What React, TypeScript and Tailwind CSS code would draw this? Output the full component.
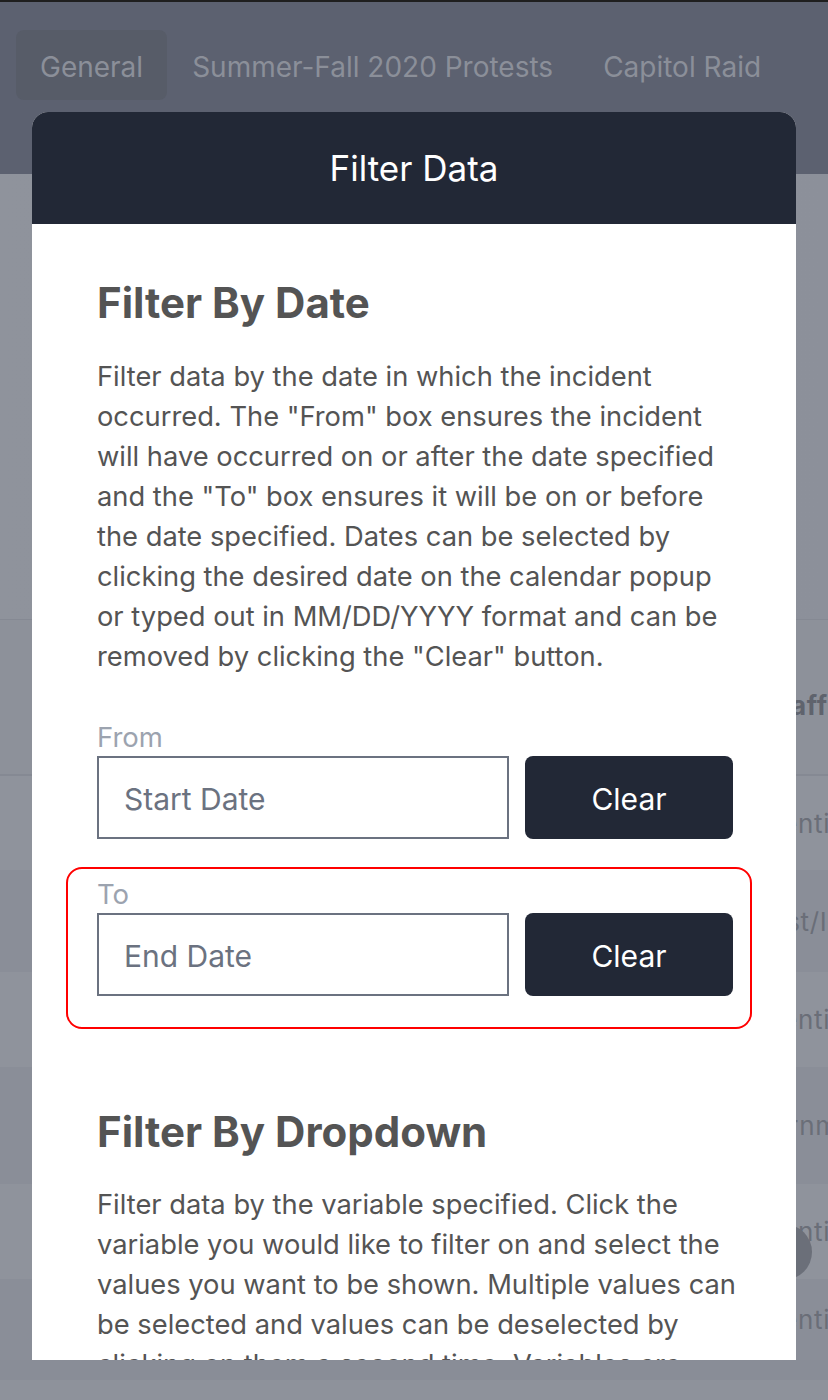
import { useState } from 'react'

const tabs = ['General', 'Summer-Fall 2020 Protests', 'Capitol Raid']

const dateText = [
  'Filter data by the date in which the incident',
  'occurred. The "From" box ensures the incident',
  'will have occurred on or after the date specified',
  'and the "To" box ensures it will be on or before',
  'the date specified. Dates can be selected by',
  'clicking the desired date on the calendar popup',
  'or typed out in MM/DD/YYYY format and can be',
  'removed by clicking the "Clear" button.',
]

const dropdownText = [
  'Filter data by the variable specified. Click the',
  'variable you would like to filter on and select the',
  'values you want to be shown. Multiple values can',
  'be selected and values can be deselected by',
  'clicking on them a second time. Variables are',
]

// rows of the table behind the overlay, only their right edge shows
const rows = [
  { text: 'Identity', cls: 'h-[94px] bg-[#8f939c] pl-[758px]' },
  { text: 'Protest/Ideology', cls: 'h-[102px] bg-[#8a8e98] pl-[718px]' },
  { text: 'Identity', cls: 'h-[95px] bg-[#8f939c] pl-[758px]' },
  { text: 'Government', cls: 'h-[117px] bg-[#8a8e98] pl-[722px]' },
  { text: 'Identity', cls: 'h-[95px] bg-[#8f939c] pl-[758px]' },
  { text: 'Identity', cls: 'h-[81px] bg-[#8a8e98] pl-[758px]' },
]

function DateRow({ label, placeholder }: { label: string; placeholder: string }) {
  const [value, setValue] = useState('')
  return (
    <div>
      <div className="text-[27.5px] leading-[32px] text-[#9ca3af] mb-[3px]">{label}</div>
      <div className="flex gap-4">
        <input
          value={value}
          onChange={(e) => setValue(e.target.value)}
          placeholder={placeholder}
          className="w-[412px] h-[83px] border-2 border-[#6b7280] px-[25px] pt-[3px] text-[30px] text-[#374151] placeholder:text-[#6b7280] outline-none"
        />
        <button
          onClick={() => setValue('')}
          className="w-[208px] h-[83px] rounded-lg bg-[#222836] text-white text-[30px] pt-[3px]"
        >
          Clear
        </button>
      </div>
    </div>
  )
}

export default function App() {
  return (
    <div
      className="relative h-[1400px] w-full overflow-hidden bg-[#8e929b]"
      style={{ fontFamily: 'Inter, "Noto Sans", sans-serif' }}
    >
      {/* Page behind the overlay */}
      <div className="h-[174px] bg-[#5c6170] border-t-2 border-[#1f1f1f] pt-[28px] px-4">
        <div className="flex items-center">
          {tabs.map((tab, i) => (
            <div
              key={tab}
              className={`h-[70px] flex items-center px-[24px] pt-[4px] rounded-lg text-[28px] text-[#8b8f99] ${
                i === 0 ? 'bg-[#575c68] mr-[1px]' : 'mr-[2px]'
              }`}
            >
              {tab}
            </div>
          ))}
        </div>
      </div>
      <div className="h-[446px] bg-gradient-to-r from-[#8f939c] to-[#8c909a] border-b border-[#858993]" />
      <div className="h-[156px] bg-[#8d919a] border-b-2 border-[#858993] flex items-end pb-[49px] pl-[703px]">
        <span className="text-[26px] font-bold text-[#5f636d] tracking-wide whitespace-nowrap">Group affiliation</span>
      </div>
      {rows.map((row, i) => (
        <div key={i} className={`flex items-center whitespace-nowrap ${row.cls}`}>
          <span className="text-[26px] text-[#6a6e78] tracking-wide">{row.text}</span>
        </div>
      ))}
      <div className="h-[20px] bg-[#898d97]" />
      <div className="h-[40px] bg-[#8e929b]" />

      {/* floating button behind overlay */}
      <div className="absolute left-[756px] top-[1224px] w-[56px] h-[56px] rounded-full bg-[#6b6f79]" />

      {/* Modal */}
      <div className="absolute left-[32px] top-[112px] w-[764px] h-[1248px] rounded-t-2xl overflow-hidden bg-white">
        <div className="h-[112px] bg-[#222836] flex items-center justify-center">
          <h1 className="text-white text-[35px]">Filter Data</h1>
        </div>
        <div className="pl-[65px] pr-[40px] pt-[54px]">
          <h2 className="text-[42px] leading-[50px] font-bold text-[#545454]">Filter By Date</h2>
          <p className="mt-[29px] text-[27.3px] leading-[40px] text-[#545454]">
            {dateText.map((line) => (
              <span key={line} className="block whitespace-nowrap">
                {line}
              </span>
            ))}
          </p>

          <div className="mt-[44px]">
            <DateRow label="From" placeholder="Start Date" />
          </div>
          <div className="mt-[28px] ml-[-31px] w-[686px] border-2 border-[#ff0000] rounded-2xl pl-[29px] pt-[9px] pb-[31px]">
            <DateRow label="To" placeholder="End Date" />
          </div>

          <h2 className="mt-[78px] text-[42px] leading-[50px] font-bold text-[#545454]">Filter By Dropdown</h2>
          <p className="mt-[28px] text-[27.3px] leading-[40px] text-[#545454]">
            {dropdownText.map((line) => (
              <span key={line} className="block whitespace-nowrap">
                {line}
              </span>
            ))}
          </p>
        </div>
      </div>
    </div>
  )
}
